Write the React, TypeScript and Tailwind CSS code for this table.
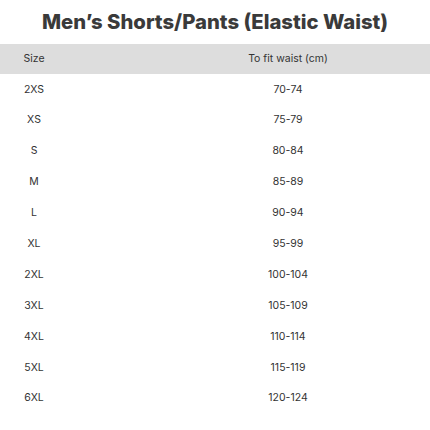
import React from "react";

const rows: [string, string][] = [
  ["2XS", "70-74"],
  ["XS", "75-79"],
  ["S", "80-84"],
  ["M", "85-89"],
  ["L", "90-94"],
  ["XL", "95-99"],
  ["2XL", "100-104"],
  ["3XL", "105-109"],
  ["4XL", "110-114"],
  ["5XL", "115-119"],
  ["6XL", "120-124"],
];

export default function App() {
  return (
    <div className="w-[430px] h-[430px] bg-white text-[#333333]" style={{ fontFamily: "Inter, 'Liberation Sans', sans-serif" }}>
      <div className="h-[44px] flex items-center justify-center">
        <h1 className="text-[20.3px] font-extrabold text-[#3a3a3a] leading-none" style={{ fontFamily: "Inter, 'Liberation Sans', sans-serif" }}>
          Men’s Shorts/Pants (Elastic Waist)
        </h1>
      </div>
      <div className="grid grid-cols-[68px_1fr] h-[30px] bg-[#dddddd] items-center text-[10.5px]">
        <div className="text-center">Size</div>
        <div className="text-center pl-[78px]">To fit waist (cm)</div>
      </div>
      {rows.map(([s, w]) => (
        <div key={s} className="grid grid-cols-[68px_1fr] h-[30.9px] items-center text-[10.5px]">
          <div className="text-center">{s}</div>
          <div className="text-center pl-[78px]">{w}</div>
        </div>
      ))}
    </div>
  );
}
